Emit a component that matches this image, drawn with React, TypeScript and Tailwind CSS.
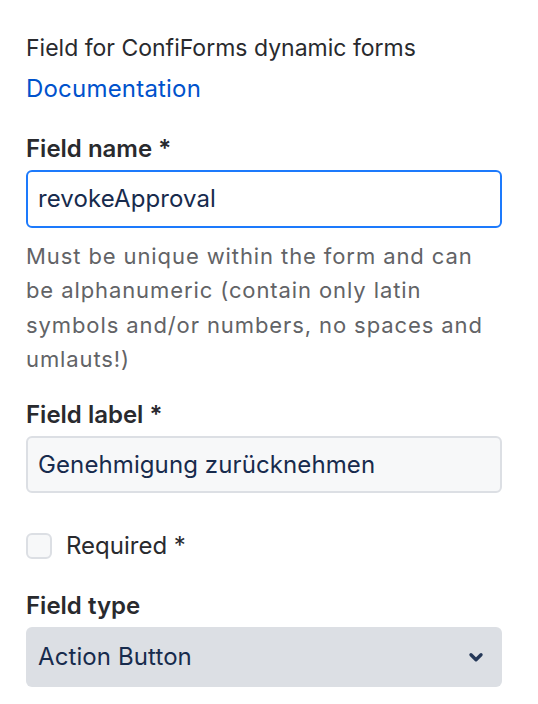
import React from "react";

const font = { fontFamily: "Inter, 'Noto Sans', sans-serif" };

export default function App() {
  return (
    <div className="w-[538px] h-[704px] bg-white overflow-hidden" style={font}>
      <div className="pl-[26px] pr-[36px] pt-[31px] flex flex-col">
        <p className="text-[23px] leading-[34px] text-[#292a2e]">
          Field for ConfiForms dynamic forms
        </p>
        <a className="mt-[7px] text-[24px] leading-[34px] text-[#0052cc] tracking-[0.2px]">
          Documentation
        </a>
        <label className="mt-[26px] text-[24px] leading-[34px] font-semibold text-[#292a2e]">
          Field name *
        </label>
        <div className="mt-[4px] h-[58px] rounded-[6px] border-2 border-[#1d7afc] bg-white flex items-center px-[10px]">
          <span className="text-[24px] text-[#172b4d] tracking-[0.1px]">revokeApproval</span>
        </div>
        <p className="mt-[11px] text-[22px] leading-[34.3px] text-[#626366] tracking-[0.9px]">
          Must be unique within the form and can be alphanumeric (contain only latin symbols and/or numbers, no spaces and umlauts!)
        </p>
        <label className="mt-[22px] text-[24px] leading-[34px] font-semibold text-[#292a2e]">
          Field label *
        </label>
        <div className="mt-[4px] h-[57px] rounded-[6px] border-2 border-[#dcdfe4] bg-[#f7f8f9] flex items-center px-[10px]">
          <span className="text-[24px] text-[#172b4d] tracking-[0.1px]">Genehmigung zurücknehmen</span>
        </div>
        <div className="mt-[36px] flex items-center gap-[14px]">
          <span className="w-[26px] h-[26px] rounded-[6px] border-2 border-[#dcdfe4] bg-[#f7f8f9]" />
          <span className="text-[24px] leading-[34px] text-[#292a2e]">Required *</span>
        </div>
        <label className="mt-[26px] text-[24px] leading-[34px] font-semibold text-[#292a2e]">
          Field type
        </label>
        <div className="mt-[4px] h-[60px] rounded-[6px] bg-[#dcdfe4] flex items-center justify-between pl-[12px] pr-[15px]">
          <span className="text-[24px] text-[#172b4d] tracking-[0.1px]">Action Button</span>
          <svg width="22" height="22" viewBox="0 0 24 24" aria-hidden="true">
            <path d="M6.5 9.5l5.5 5.5 5.5-5.5" fill="none" stroke="#253858" strokeWidth="3.6" strokeLinecap="round" strokeLinejoin="round" />
          </svg>
        </div>
      </div>
    </div>
  );
}
